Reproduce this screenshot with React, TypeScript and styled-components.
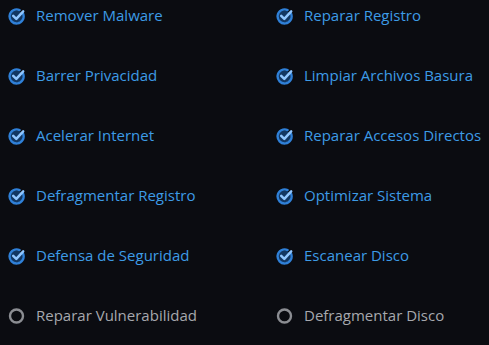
import React from "react";
import styled, { createGlobalStyle } from "styled-components";

const GlobalStyle = createGlobalStyle`
  html, body {
    margin: 0;
    padding: 0;
    background: #0b0c11;
  }
  body {
    font-family: "Open Sans", "Liberation Sans", sans-serif;
  }
`;

const items: { label: string; done: boolean }[] = [
  { label: "Remover Malware", done: true },
  { label: "Reparar Registro", done: true },
  { label: "Barrer Privacidad", done: true },
  { label: "Limpiar Archivos Basura", done: true },
  { label: "Acelerar Internet", done: true },
  { label: "Reparar Accesos Directos", done: true },
  { label: "Defragmentar Registro", done: true },
  { label: "Optimizar Sistema", done: true },
  { label: "Defensa de Seguridad", done: true },
  { label: "Escanear Disco", done: true },
  { label: "Reparar Vulnerabilidad", done: false },
  { label: "Defragmentar Disco", done: false },
];

const CheckIcon = () => (
  <svg width="18" height="18" viewBox="0 0 18 18">
    <circle cx="8.5" cy="9.5" r="6" fill="#123763" />
    <path
      d="M15 6.6 A7 7 0 1 1 11.6 3.1"
      fill="none"
      stroke="#2f80d8"
      strokeWidth="2.4"
      strokeLinecap="round"
    />
    <path
      d="M5.2 8.8 L8.3 11.8 L15.2 4.4"
      fill="none"
      stroke="#90c6ff"
      strokeWidth="2.5"
      strokeLinecap="round"
      strokeLinejoin="round"
    />
  </svg>
);

const PendingIcon = () => (
  <svg width="18" height="18" viewBox="0 0 18 18">
    <circle cx="8.5" cy="9" r="6.5" fill="none" stroke="#8b8d92" strokeWidth="2.4" />
  </svg>
);

const App = () => (
  <>
    <GlobalStyle />
    <Grid>
      {items.map((it) => (
        <Row key={it.label}>
          <IconBox>{it.done ? <CheckIcon /> : <PendingIcon />}</IconBox>
          <Label done={it.done}>{it.label}</Label>
        </Row>
      ))}
    </Grid>
  </>
);

const Grid = styled.div`
  display: grid;
  grid-template-columns: 268px 1fr;
  grid-auto-rows: 32px;
  row-gap: 28px;
  padding-left: 8px;
`;
const Row = styled.div`
  display: flex;
  align-items: center;
  gap: 10px;
`;
const IconBox = styled.span`
  display: flex;
  width: 18px;
  height: 18px;
`;
const Label = styled.span<{ done: boolean }>`
  font-size: 15px;
  line-height: 20px;
  margin-top: -2px;
  color: ${(p) => (p.done ? "#3d9be6" : "#a6a8ad")};
  white-space: nowrap;
`;

export default App;
